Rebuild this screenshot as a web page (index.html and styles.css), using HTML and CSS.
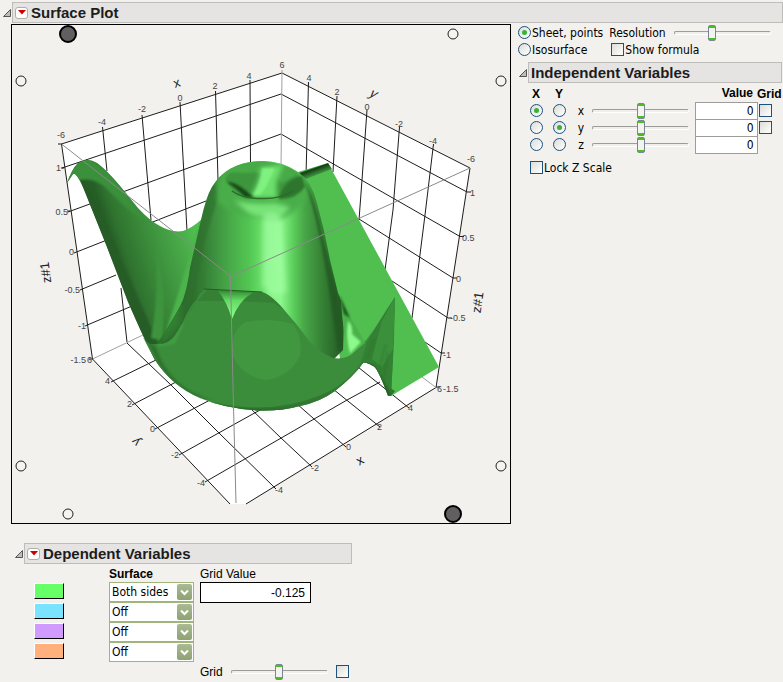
FILE: index.html
```html
<!DOCTYPE html>
<html lang="en">
<head>
<meta charset="utf-8">
<title>Surface Plot</title>
<link rel="stylesheet" href="styles.css">
</head>
<body>
<header class="section">
  <svg class="disclose" viewBox="0 0 10 10"><path d="M1.5 8.5 8.5 1.5V8.5Z"/></svg>
  <div class="bar">
    <button class="menu" aria-label="Surface Plot menu"><svg viewBox="0 0 8 5"><path d="M0 0H8L4 4.5Z"/></svg></button>
    <h1>Surface Plot</h1>
  </div>
</header>

<main class="top">
  <div class="plot">
  <svg viewBox="12 25 498 498" role="img" aria-label="3D surface of z#1 over x and y">
    <defs>
      <filter id="b1" x="-30%" y="-30%" width="160%" height="160%"><feGaussianBlur stdDeviation="1"/></filter>
      <filter id="b3" x="-60%" y="-60%" width="220%" height="220%"><feGaussianBlur stdDeviation="2.5"/></filter>
      <linearGradient id="dome" gradientUnits="userSpaceOnUse" x1="187" y1="0" x2="343" y2="0">
        <stop offset="0" stop-color="#2c692c"/><stop offset=".1" stop-color="#347c34"/><stop offset=".2" stop-color="#409740"/>
        <stop offset=".3" stop-color="#4ab04a"/><stop offset=".4" stop-color="#53c653"/><stop offset=".47" stop-color="#66dc66"/>
        <stop offset=".53" stop-color="#84f084"/><stop offset=".6" stop-color="#8cf88c"/><stop offset=".68" stop-color="#5ccf5c"/>
        <stop offset=".75" stop-color="#48a848"/><stop offset=".85" stop-color="#388638"/><stop offset="1" stop-color="#245a24"/>
      </linearGradient>
      <linearGradient id="wing" gradientUnits="userSpaceOnUse" x1="98" y1="255" x2="198" y2="222">
        <stop offset="0" stop-color="#245524"/><stop offset=".17" stop-color="#265f26"/><stop offset=".26" stop-color="#2f722f"/>
        <stop offset=".4" stop-color="#368236"/><stop offset=".6" stop-color="#409840"/><stop offset=".8" stop-color="#49ac49"/><stop offset="1" stop-color="#52c452"/>
      </linearGradient>
      <linearGradient id="curl" gradientUnits="userSpaceOnUse" x1="314" y1="166" x2="318" y2="177">
        <stop offset="0" stop-color="#3d913d"/><stop offset=".25" stop-color="#173e17"/><stop offset="1" stop-color="#4ebb4e"/>
      </linearGradient>
      <linearGradient id="notch" x1="0" y1="0" x2="0" y2="1"><stop offset="0" stop-color="#349034"/><stop offset=".35" stop-color="#65db65"/><stop offset="1" stop-color="#8dff8d"/></linearGradient>
      <clipPath id="domeClip"><path id="domeShape" d="M158 343C164 333 177 314 183 300Q188 285 190 268L201 220Q206 197 212 187Q219 175 230 169Q244 161 262 161Q282 161 298 172Q312 182 317 203Q325 232 330 260L338 293L344 308L343 350L333 360H200Z"/></clipPath>
      <clipPath id="bowlClip"><path id="bowlShape" d="M143 337C150 348 154 343 162 344C174 342 178 330 183 322Q188 308 197 299Q201 290 207 289L262 292Q269 294 280 305L297 325L310 342Q321 353 333 358Q346 360 353 353Q367 342 380 320L395 297L394 340L391 396L388 396Q377 366 373 366Q365 361 363 363Q354 376 335 391Q320 402 300 406Q282 411 260 410.5Q226 409 200 398Q172 386 155 360Z"/></clipPath>
      <clipPath id="wingClip"><path id="wingShape" d="M67 183Q72 169 78 163Q87 157 97 163Q108 171 125 192L138 208Q150 221 160 226Q172 233 183 231Q192 228 202 219L202 310L180 350L155 360Q145 341 128 302L107 247L87 197Q77 171 73 174Z"/></clipPath>
    </defs>

    <path class="walls" d="M61.500 144 282 73 470 168 436 387.500 246 504H230L92.500 359Z"/>
    <g class="lines">
      <path d="M61.500 144 282 73 470 168M61.500 144 92.500 359 230 504M246 504 436 387.500 470 168"/>
      <path d="M102.500 127 107 171M121 288 127 342M142 115 151 220M180 102 187 231M215.500 91 218 180M250 80 250.500 165M308.500 82 306 175M337 96 333 172M367 110 362 180 359 220M399.500 127 393 210 385 270M433.500 144 425 215 412 318"/>
      <path d="M62 168 281 94 467 192M68 212 281 134 460 236.500M74 253 206 201M80 290 116 275M85 326 132 306M359 219 453 278M392 281 448 318M422 340 441 353"/>
      <path d="M111 382 158 359M132 405 176 382M155 429 210 400M179 455 269 405M205 482 347 400 380 382"/>
      <path d="M127 343 171 385 219 433 276 489M249 407 281 438 312 467M297 404 346 447M333 389 380 427M358 367 409 408"/>
      <path class="faint" d="M282 70 281 170M92.500 359 143 335M422 377 436 387.500"/>
      <path d="M58 144H62M89 359H93M64 168H61M70 211H67M467 192H471M460 236.500H464M453 278H457M448 318H452M441 353H445M436 387H440"/>
    </g>

    <path d="M298 172 328 163 439 367 391 396 385 378 374 364 340 359 332 300Z" fill="#50bf50"/>
    <path d="M299 173 328 163 332 169 306 179Z" fill="url(#curl)"/>
    <use href="#wingShape" fill="url(#wing)"/>
    <g clip-path="url(#wingClip)" filter="url(#b1)">
      <path d="M66 180Q74 158 88 158Q105 166 125 192L145 222Q124 207 105 187Q89 173 66 185Z" fill="#3b903b"/>
      <path d="M79 181Q96 203 115 247L161 350 145 343 82 187Z" fill="#255b25"/>
      <path d="M155 240Q168 285 162 340L151 338Q160 292 155 240Z" fill="#3e943e"/>
      <path d="M200 220Q183 280 164 338L176 325 208 230Z" fill="#4bb44b"/>
    </g>
    <use href="#domeShape" fill="url(#dome)"/>
    <g clip-path="url(#domeClip)">
      <path d="M214 176Q205 200 196 242L184 301 160 342 177 336 194 295Q201 245 218 198Z" fill="#2d702d" opacity=".65" filter="url(#b1)"/>
      <path d="M164 325Q168 300 181 304L180 325 160 345Z" fill="#337e33" filter="url(#b3)"/>
      <path d="M219 181Q226 163 262 160Q301 163 309 190Q301 212 280 219Q235 219 217 201Z" fill="#48ae48" filter="url(#b3)"/>
      <path d="M225 179Q232 164 260 163Q293 164 302 181Q292 198 262 199Q236 199 225 179Z" fill="#3d953d" filter="url(#b1)"/>
      <path d="M222 172Q240 161 265 161Q285 164 298 174L282 183Q270 170 246 173Z" fill="#46aa46" filter="url(#b1)"/>
      <path d="M250 198Q261 178 260 168L284 164Q273 183 278 198Z" fill="#6ce06c" filter="url(#b3)"/>
      <path d="M262 168H275L266 187 260 195 253 195Q261 182 262 168Z" fill="#87f787" opacity=".75" filter="url(#b1)"/>
      <path d="M227 182Q236 188 245 197L254 198Q238 182 227 182Z" fill="#174817" filter="url(#b1)"/>
      <path d="M279 197Q285 179 302 176L305 187Q295 200 279 199Z" fill="#2e762e" filter="url(#b1)"/>
      <path d="M232 191Q243 199 262 198.500Q281 199 293 191" fill="none" stroke="#286b28" stroke-width="1.5"/>
      <path d="M234 200Q250 205 275 203L290 207 280 220Q255 218 247 212Z" fill="#78e478" filter="url(#b3)"/>
      <path d="M263 216Q273 209 281 218L287 292 272 296 262 285Z" fill="#a4ffa4" opacity=".6" filter="url(#b3)"/>
      <path d="M304 181Q315 198 321 231L337 292 346 350 338 350 327 277Q316 209 304 181Z" fill="#225722" opacity=".75" filter="url(#b1)"/>
    </g>
    <use href="#bowlShape" fill="#3b8c3b"/>
    <g clip-path="url(#bowlClip)">
      <path d="M143 337Q167 390 210 402Q270 416 321 395Q350 383 363 360L372 348 365 380 330 405 260 420 190 407 141 364Z" fill="#327832"/>
      <path d="M142 342Q164 389 210 403Q263 415 304 405L260 417 180 400 138 364Z" fill="#286328" filter="url(#b1)"/>
      <path d="M156 347Q169 388 212 400 180 397 157 361L147 341Z" fill="#2e712e" filter="url(#b1)"/>
      <path d="M160 335Q164 346 178 326L185 322 175 344 158 347Z" fill="#419b41" filter="url(#b1)"/>
      <path d="M187 316Q192 306 198 300L208 289 219 291 225 301H197Z" fill="#368036"/>
      <path d="M239 301Q246 292 262 292L271 296 284 310 274 303Z" fill="#368036"/>
      <path d="M232 347Q233 328 246 322Q270 317 293 324Q303 337 300 356Q290 377 266 380Q242 377 232 355Z" fill="#409740"/>
      <path d="M367 342 395 296 392 396 386 388 373 366 359 368Z" fill="#348034"/>
      <path d="M382 321 395 297 393 349 382 367 372 359Z" fill="#3b913b"/>
      <path d="M364 363 374 365 392 396 386 396Z" fill="#245e24" filter="url(#b1)"/>
      <path d="M386 344 378 373M388 352 383 380M374 339 367 358" stroke="#2d722d" fill="none" filter="url(#b1)"/>
    </g>
    <path d="M218 291 252 293Q239 301 232 319Q226 300 218 291Z" fill="url(#notch)"/>
    <path d="M204 289 262 292" stroke="#245e24" stroke-width="1" fill="none"/>
    <path d="M341 300Q350 318 357 328L365 343 350 355Q343 338 341 300Z" fill="#4bb24b"/>
    <path d="M348 321Q353 325 352 334L361 342 350 354Q345 337 348 321Z" fill="#8bfa8b" filter="url(#b1)"/>
    <path d="M339 294 350 318 344 314Z" fill="#1f541f" filter="url(#b1)"/>
    <path d="M390 388 395 391 391 396Z" fill="#2e752e"/>

    <path class="frame" d="M61.500 144 231 276.500 470 168M230.500 276.500 233 387 236 503"/>

    <g class="ticks">
      <text x="61" y="138">-6</text><text x="102" y="125">-4</text><text x="142" y="112">-2</text><text x="180" y="101">0</text><text x="215" y="89">2</text><text x="249" y="79">4</text><text x="282" y="68">6</text>
      <text x="309" y="81">4</text><text x="337" y="95">2</text><text x="367" y="110">0</text><text x="399" y="127">-2</text><text x="433" y="144">-4</text><text x="471" y="162">-6</text>
      <g class="end">
        <text x="61" y="171">1</text><text x="68" y="215">0.5</text><text x="74" y="255">0</text><text x="80" y="293">-0.5</text><text x="86" y="329">-1</text><text x="86" y="363">-1.5</text><text x="92" y="363">6</text>
        <text x="110" y="384">4</text><text x="132" y="407">2</text><text x="155" y="432">0</text><text x="179" y="458">-2</text><text x="205" y="486">-4</text>
      </g>
      <g class="start">
        <text x="470" y="196">1</text><text x="462" y="241">0.5</text><text x="456" y="282">0</text><text x="450" y="321">-0.5</text><text x="443" y="358">-1</text><text x="443" y="392">-1.5</text><text x="437" y="392">6</text>
        <text x="408" y="411">4</text><text x="377" y="430">2</text><text x="346" y="450">0</text><text x="311" y="471">-2</text><text x="275" y="493">-4</text>
      </g>
    </g>
    <g class="names">
      <text transform="translate(178 87) rotate(-18)">x</text>
      <text transform="translate(371 97) rotate(22) skewX(-20)">y</text>
      <text transform="translate(362 464) rotate(-30)">x</text>
      <text transform="translate(139 439) rotate(228)">y</text>
      <text transform="translate(50 272) rotate(-97)">z#1</text>
      <text transform="translate(482 303) rotate(-82)">z#1</text>
    </g>
    <g class="handles">
      <circle cx="21" cy="81" r="5"/><circle cx="453" cy="34" r="5"/><circle cx="501" cy="81" r="5"/><circle cx="21" cy="466" r="5"/><circle cx="501" cy="466" r="5"/><circle cx="68" cy="514" r="5"/>
      <circle class="solid" cx="68" cy="34" r="8"/><circle class="solid" cx="453" cy="514" r="8"/>
    </g>
  </svg>
  </div>

  <div class="controls">
    <div class="line">
      <label><input type="radio" name="mode" checked>Sheet, points</label>
      <label class="resolution">Resolution<input type="range" value="38"></label>
    </div>
    <div class="line second">
      <label><input type="radio" name="mode">Isosurface</label>
      <label><input type="checkbox">Show formula</label>
    </div>
    <div class="section inner">
      <svg class="disclose" viewBox="0 0 10 10"><path d="M1.5 8.5 8.5 1.5V8.5Z"/></svg>
      <div class="bar"><h2>Independent Variables</h2></div>
    </div>
    <table class="vars">
      <thead><tr><th class="pick">X</th><th class="axis">Y</th><th class="name"></th><th class="slide"></th><th class="value">Value</th><th class="grid">Grid</th></tr></thead>
      <tbody>
        <tr><td><input type="radio" name="xa" aria-label="X axis x" checked></td><td><input type="radio" name="ya" aria-label="Y axis x"></td><td>x</td><td class="slide"><input type="range" aria-label="x"></td><td class="value"><input type="text" aria-label="x value" value="0"></td><td class="grid"><input type="checkbox" aria-label="x grid"></td></tr>
        <tr><td><input type="radio" name="xa" aria-label="X axis y"></td><td><input type="radio" name="ya" aria-label="Y axis y" checked></td><td>y</td><td class="slide"><input type="range" aria-label="y"></td><td class="value"><input type="text" aria-label="y value" value="0"></td><td class="grid"><input type="checkbox" aria-label="y grid"></td></tr>
        <tr><td><input type="radio" name="xa" aria-label="X axis z"></td><td><input type="radio" name="ya" aria-label="Y axis z"></td><td>z</td><td class="slide"><input type="range" aria-label="z"></td><td class="value"><input type="text" aria-label="z value" value="0"></td><td></td></tr>
      </tbody>
    </table>
    <label class="lock"><input type="checkbox">Lock Z Scale</label>
  </div>
</main>

<section class="dependent">
  <div class="section">
    <svg class="disclose" viewBox="0 0 10 10"><path d="M1.5 8.5 8.5 1.5V8.5Z"/></svg>
    <div class="bar">
      <button class="menu" aria-label="Dependent Variables menu"><svg viewBox="0 0 8 5"><path d="M0 0H8L4 4.5Z"/></svg></button>
      <h2>Dependent Variables</h2>
    </div>
  </div>
  <div class="surfaces">
    <div class="swatches">
      <button class="swatch green" aria-label="Color 1"></button>
      <button class="swatch blue" aria-label="Color 2"></button>
      <button class="swatch purple" aria-label="Color 3"></button>
      <button class="swatch orange" aria-label="Color 4"></button>
    </div>
    <div class="selects">
      <b>Surface</b>
      <span class="select"><select aria-label="Surface 1"><option>Both sides</option><option>Off</option></select><svg viewBox="0 0 15 16"><path d="m4 6.500 3.500 3.500L11 6.500"/></svg></span>
      <span class="select"><select aria-label="Surface 2"><option>Off</option></select><svg viewBox="0 0 15 16"><path d="m4 6.500 3.500 3.500L11 6.500"/></svg></span>
      <span class="select"><select aria-label="Surface 3"><option>Off</option></select><svg viewBox="0 0 15 16"><path d="m4 6.500 3.500 3.500L11 6.500"/></svg></span>
      <span class="select"><select aria-label="Surface 4"><option>Off</option></select><svg viewBox="0 0 15 16"><path d="m4 6.500 3.500 3.500L11 6.500"/></svg></span>
    </div>
    <div class="gridvalue">
      <label for="gv">Grid Value</label>
      <input id="gv" type="text" value="-0.125">
      <div class="gridline"><label for="gs">Grid</label><input id="gs" type="range"><input type="checkbox" aria-label="Show grid"></div>
    </div>
  </div>
</section>
</body>
</html>
```
FILE: styles.css
```css
* { box-sizing: border-box; }
body {
  margin: 0;
  background: #f2f1ed;
  color: #000;
  font: 12px/16px "DejaVu Sans Condensed", "Open Sans", sans-serif;
}
h1, h2 { margin: 0; font: bold 15px/18px "Liberation Sans", Arial, sans-serif; color: #1c1c1c; }
input, select, button { margin: 0; padding: 0; font: inherit; color: inherit; }

.section { display: flex; align-items: center; }
header.section { padding: 2px 0 0 2px; }
.disclose { width: 10px; height: 10px; flex: none; }
.disclose path { fill: #bdbdbd; stroke: #555; }
.bar {
  flex: 1;
  display: flex;
  align-items: center;
  gap: 3px;
  height: 21px;
  padding: 0 2px;
  background: #e5e4e2;
  border: 1px solid #bebdba;
}
.menu {
  display: flex;
  align-items: center;
  justify-content: center;
  width: 13px;
  height: 12px;
  background: #fff;
  border: 1px solid #b0aea5;
  border-radius: 3px;
}
.menu svg { width: 8px; height: 5px; }
.menu path { fill: #d00000; }

.top {
  display: grid;
  grid-template-columns: minmax(0, 500px) minmax(0, 1fr);
  gap: 7px;
  padding: 1px 0 0 11px;
}
.plot { border: 1px solid #000; }
.plot svg { display: block; width: 100%; }
.walls { fill: #fff; }
.lines { fill: none; stroke: #1c1c1c; }
.lines .faint { stroke: #a0a0a0; }
.frame { fill: none; stroke: #8a8a8a; }
.ticks { font: 9px "Liberation Sans", Arial, sans-serif; fill: #444; text-anchor: middle; }
.ticks .end { text-anchor: end; }
.ticks .start { text-anchor: start; }
.names { font: 13px "Liberation Sans", Arial, sans-serif; fill: #222; text-anchor: middle; }
.handles circle { fill: #f5f4f0; stroke: #222; }
.handles .solid { fill: #606060; stroke: #000; stroke-width: 2px; }

input[type="radio"], input[type="checkbox"] {
  appearance: none;
  flex: none;
  display: grid;
  place-items: center;
  width: 13px;
  height: 13px;
  border: 1px solid #1c5180;
  background: linear-gradient(135deg, #dcdcd7, #fff);
}
input[type="radio"] { border-radius: 50%; }
input[type="radio"]:checked::before {
  content: "";
  width: 5px;
  height: 5px;
  border-radius: 50%;
  background: #35b435;
}
input[type="range"] {
  appearance: none;
  display: block;
  width: 97px;
  height: 17px;
  background: none;
}
input[type="range"]::-webkit-slider-runnable-track {
  height: 4px;
  border: 1px solid #fff;
  border-top-color: #9d9c99;
  border-left-color: #9d9c99;
  border-radius: 2px;
  background: #f0efeb;
}
input[type="range"]::-webkit-slider-thumb {
  appearance: none;
  width: 8px;
  height: 16px;
  margin-top: -7px;
  border: 1px solid #778892;
  border-radius: 2px;
  background: linear-gradient(#49c01e 0 2px, #f3f3ef 2px 12px, #49c01e 12px);
}

.line { display: flex; align-items: center; height: 17px; }
.line label { display: flex; align-items: center; gap: 1px; }
.line .resolution { gap: 8px; padding-left: 6px; }
.line.second { gap: 24px; }
.inner { margin-top: 4px; padding-right: 1px; }
.vars { margin: 2px 0 0 6px; border-collapse: collapse; table-layout: fixed; width: 258px; }
.vars th, .vars td { padding: 0; height: 17px; text-align: center; }
.vars th { font: bold 12px/16px "Liberation Sans", Arial, sans-serif; }
.vars .pick { width: 24px; }
.vars .axis, .vars .name { width: 22px; }
.vars .slide { width: 103px; }
.vars .value { width: 62px; text-align: right; }
.vars th.value { padding-right: 4px; }
.vars .grid { width: 25px; text-align: left; }
.vars td.grid { padding-left: 1px; }
.vars td.value { border: 1px solid #9d9c99; background: #fff; }
.vars td input[type="radio"] { margin: 0 auto; }
.vars input[type="text"] { display: block; width: 100%; height: 16px; padding-right: 3px; border: 0; background: none; text-align: right; }
.lock { display: flex; align-items: center; gap: 1px; margin: 6px 0 0 12px; }

.dependent { padding: 19px 0 8px 14px; }
.dependent .section { width: 338px; max-width: 100%; }
.surfaces { display: flex; padding: 2px 0 0 20px; }
.swatches { display: flex; flex-direction: column; gap: 4px; width: 75px; padding-top: 17px; }
.swatch { width: 30px; height: 16px; border: 1px solid #fff; border-right-color: #000; border-bottom-color: #000; }
.green { background: #66ff66; }
.blue { background: #7ae3ff; }
.purple { background: #d19aff; }
.orange { background: #ffb07c; }
.selects { display: flex; flex-direction: column; width: 85px; margin-right: 6px; }
.selects b, .gridvalue { font-family: "Liberation Sans", Arial, sans-serif; }
.select { position: relative; display: block; }
.select select {
  appearance: none;
  display: block;
  width: 100%;
  height: 20px;
  padding: 0 0 0 2px;
  border: 1px solid #9fb57a;
  border-radius: 0;
  background: #fff;
}
.select svg {
  position: absolute;
  top: 2px;
  right: 2px;
  width: 15px;
  height: 16px;
  border-radius: 2px;
  background: linear-gradient(#aaba94, #8ea272);
  pointer-events: none;
}
.select path { fill: none; stroke: #fff; stroke-width: 2px; }
.gridvalue { display: flex; flex-direction: column; align-items: flex-start; }
.gridvalue input[type="text"] { width: 111px; height: 21px; padding-right: 5px; border: 1px solid #000; background: #fff; text-align: right; }
.gridline { display: flex; align-items: center; gap: 8px; padding-top: 60px; }
```
